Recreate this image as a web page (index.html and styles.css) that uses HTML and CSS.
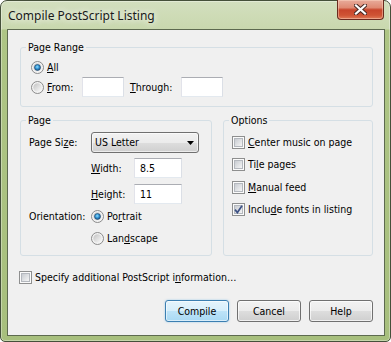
FILE: index.html
```html
<!DOCTYPE html>
<html>
<head>
<meta charset="utf-8">
<link rel="stylesheet" href="styles.css">
</head>
<body>
<svg class="defs" width="0" height="0" aria-hidden="true">
  <defs>
    <linearGradient id="rin" x1="0" y1="0" x2="1" y2="1">
      <stop offset="0" stop-color="#c2c2c2"/>
      <stop offset="1" stop-color="#fbfbfb"/>
    </linearGradient>
    <radialGradient id="rdot" cx="0.45" cy="0.4" r="0.6">
      <stop offset="0" stop-color="#8fe0ff"/>
      <stop offset="0.55" stop-color="#2f8fd0"/>
      <stop offset="1" stop-color="#1a4f80"/>
    </radialGradient>
    <linearGradient id="cin" x1="0" y1="0" x2="1" y2="1">
      <stop offset="0" stop-color="#c5c9cf"/>
      <stop offset="1" stop-color="#f8f8f8"/>
    </linearGradient>
  </defs>
</svg>
<div class="window">
  <div class="titlebar">
    <span class="title">Compile PostScript Listing</span>
    <div class="close">
      <svg width="13" height="11" viewBox="0 0 13 11">
        <path d="M2 1.5 L11 9.5 M11 1.5 L2 9.5" stroke="#4a2a24" stroke-width="4.2" stroke-linecap="square" fill="none"/>
        <path d="M2 1.5 L11 9.5 M11 1.5 L2 9.5" stroke="#ffffff" stroke-width="2.2" stroke-linecap="square" fill="none"/>
      </svg>
    </div>
  </div>
  <div class="client">
    <fieldset class="group range">
      <legend>Page Range</legend>
      <div class="range-body">
        <div class="row">
          <svg class="radio" viewBox="0 0 13 13"><circle cx="6.5" cy="6.5" r="6" fill="#f3f3f3" stroke="#8a8a8a"/><circle cx="6.5" cy="6.5" r="4.2" fill="url(#rin)"/><circle cx="6.5" cy="6.5" r="3" fill="url(#rdot)" stroke="#1d4a70" stroke-width="0.6"/></svg>
          <span class="lbl"><u>A</u>ll</span>
        </div>
        <div class="row">
          <svg class="radio" viewBox="0 0 13 13"><circle cx="6.5" cy="6.5" r="6" fill="#f3f3f3" stroke="#8a8a8a"/><circle cx="6.5" cy="6.5" r="4.2" fill="url(#rin)"/></svg>
          <span class="lbl from-lbl"><u>F</u>rom:</span>
          <div class="textbox short"></div>
          <span class="through-lbl"><u>T</u>hrough:</span>
          <div class="textbox short"></div>
        </div>
      </div>
    </fieldset>

    <div class="mid">
      <fieldset class="group page">
        <legend>Page</legend>
        <div class="page-body">
          <div class="row size-row">
            <span class="col-lbl">Page Si<u>z</u>e:</span>
            <div class="select">
              <span>US Letter</span>
              <svg width="7" height="4" viewBox="0 0 7 4"><path d="M0 0 H7 L3.5 4 Z" fill="#000"/></svg>
            </div>
          </div>
          <div class="row dim-row first">
            <span class="dim-lbl"><u>W</u>idth:</span>
            <div class="textbox dim">8.5</div>
          </div>
          <div class="row dim-row">
            <span class="dim-lbl"><u>H</u>eight:</span>
            <div class="textbox dim">11</div>
          </div>
          <div class="row orient-row">
            <span class="col-lbl">Orientation:</span>
            <svg class="radio" viewBox="0 0 13 13"><circle cx="6.5" cy="6.5" r="6" fill="#f3f3f3" stroke="#8a8a8a"/><circle cx="6.5" cy="6.5" r="4.2" fill="url(#rin)"/><circle cx="6.5" cy="6.5" r="3" fill="url(#rdot)" stroke="#1d4a70" stroke-width="0.6"/></svg>
            <span class="lbl">Po<u>r</u>trait</span>
          </div>
          <div class="row orient-row">
            <span class="col-lbl"></span>
            <svg class="radio" viewBox="0 0 13 13"><circle cx="6.5" cy="6.5" r="6" fill="#f3f3f3" stroke="#8a8a8a"/><circle cx="6.5" cy="6.5" r="4.2" fill="url(#rin)"/></svg>
            <span class="lbl">Lan<u>d</u>scape</span>
          </div>
        </div>
      </fieldset>

      <fieldset class="group options">
        <legend>Options</legend>
        <div class="options-body">
          <div class="row opt-row">
            <svg class="check" viewBox="0 0 13 13"><rect x="0.5" y="0.5" width="12" height="12" fill="#fbfbfb" stroke="#8e8f8f"/><rect x="2.5" y="2.5" width="8" height="8" fill="url(#cin)" stroke="#b4b8be"/></svg>
            <span class="lbl"><u>C</u>enter music on page</span>
          </div>
          <div class="row opt-row">
            <svg class="check" viewBox="0 0 13 13"><rect x="0.5" y="0.5" width="12" height="12" fill="#fbfbfb" stroke="#8e8f8f"/><rect x="2.5" y="2.5" width="8" height="8" fill="url(#cin)" stroke="#b4b8be"/></svg>
            <span class="lbl">Ti<u>l</u>e pages</span>
          </div>
          <div class="row opt-row">
            <svg class="check" viewBox="0 0 13 13"><rect x="0.5" y="0.5" width="12" height="12" fill="#fbfbfb" stroke="#8e8f8f"/><rect x="2.5" y="2.5" width="8" height="8" fill="url(#cin)" stroke="#b4b8be"/></svg>
            <span class="lbl"><u>M</u>anual feed</span>
          </div>
          <div class="row opt-row">
            <svg class="check" viewBox="0 0 13 13"><rect x="0.5" y="0.5" width="12" height="12" fill="#fbfbfb" stroke="#8e8f8f"/><rect x="2.5" y="2.5" width="8" height="8" fill="url(#cin)" stroke="#b4b8be"/><path d="M3 6.6 L5.4 9.6 L10 2.8" fill="none" stroke="#3d5285" stroke-width="1.7"/></svg>
            <span class="lbl">Inclu<u>d</u>e fonts in listing</span>
          </div>
        </div>
      </fieldset>
    </div>

    <div class="row specify">
      <svg class="check" viewBox="0 0 13 13"><rect x="0.5" y="0.5" width="12" height="12" fill="#fbfbfb" stroke="#8e8f8f"/><rect x="2.5" y="2.5" width="8" height="8" fill="url(#cin)" stroke="#b4b8be"/></svg>
      <span class="lbl">Specify additional PostScript i<u>n</u>formation…</span>
    </div>

    <div class="buttons">
      <div class="btn default">Compile</div>
      <div class="btn">Cancel</div>
      <div class="btn">Help</div>
    </div>
  </div>
</div>
</body>
</html>
```
FILE: styles.css
```css
html, body {
  margin: 0;
  padding: 0;
  background: #ffffff;
}

.defs {
  display: block;
  width: 0;
  height: 0;
  overflow: hidden;
}

.window {
  width: 391px;
  height: 342px;
  box-sizing: border-box;
  border: 1px solid #45503a;
  border-radius: 7px 7px 5px 5px;
  background: linear-gradient(to bottom, #d3dfbf 0px, #c9d8ae 28px, #aec585 29px, #a7bf7d 100%);
  box-shadow: inset 0 0 0 1px rgba(255, 255, 255, 0.35);
  padding: 0 5px 5px 6px;
  display: flex;
  flex-direction: column;
  font-family: "DejaVu Sans Condensed", "Liberation Sans", sans-serif;
  font-size: 10.5px;
  line-height: 13px;
  color: #000;
}

.titlebar {
  height: 28px;
  display: flex;
  align-items: flex-start;
  flex-shrink: 0;
}

.title {
  margin: 7px 0 0 1px;
  font-family: "Noto Sans", "Open Sans", sans-serif;
  font-size: 12px;
  line-height: 16px;
  color: #1a1a1a;
  text-shadow: 0 0 6px rgba(255, 255, 255, 0.9), 0 0 10px rgba(255, 255, 255, 0.7);
}

.close {
  margin-left: auto;
  margin-right: 1px;
  margin-top: -1px;
  width: 47px;
  height: 20px;
  box-sizing: border-box;
  border: 1px solid #6a2a1f;
  border-top: none;
  border-radius: 0 0 4px 4px;
  background: linear-gradient(to bottom, #e8ab9b 0%, #df8a73 40%, #c8452b 52%, #cf5334 80%, #e07a57 100%);
  box-shadow: inset 0 0 0 1px rgba(255, 220, 200, 0.45);
  display: flex;
  align-items: center;
  justify-content: center;
}

.client {
  flex: 1;
  border: 1px solid #5d6a4f;
  background: #f0f0f0;
  padding: 11px 11px 0 12px;
  display: flex;
  flex-direction: column;
}

.group {
  margin: 0;
  padding: 0;
  border: 1px solid #d5dfe5;
  border-radius: 3px;
  min-width: 0;
}

.group legend {
  margin-left: 5px;
  padding: 0 2px;
  line-height: 13px;
}

.row {
  display: flex;
  align-items: center;
}

.radio,
.check {
  width: 13px;
  height: 13px;
  flex-shrink: 0;
}

.lbl {
  margin-left: 3px;
  white-space: nowrap;
}

u {
  text-decoration: underline;
  text-underline-offset: 1px;
}

/* Page Range */
.range-body {
  padding: 3px 0 9px 10px;
}

.range-body .row {
  height: 20px;
}

.from-lbl {
  width: 35px;
}

.through-lbl {
  width: 51px;
  margin-left: 6px;
}

.textbox {
  box-sizing: border-box;
  height: 20px;
  background: #ffffff;
  border: 1px solid;
  border-color: #abadb3 #dbdfe6 #e3e9ef #e2e3ea;
  padding-left: 5px;
  display: flex;
  align-items: center;
}

.textbox.short {
  width: 42px;
}

/* Middle groups */
.mid {
  display: flex;
  gap: 11px;
  margin-top: 7px;
}

.page {
  width: 190px;
  flex-shrink: 0;
}

.options {
  flex: 1;
}

.page-body {
  padding: 5px 0 7px 8px;
}

.col-lbl {
  width: 62px;
  flex-shrink: 0;
  white-space: nowrap;
}

.size-row {
  height: 21px;
}

.select {
  box-sizing: border-box;
  width: 108px;
  height: 21px;
  border: 1px solid #707070;
  border-radius: 3px;
  background: linear-gradient(to bottom, #f2f2f2 0%, #ebebeb 50%, #dddddd 51%, #cfcfcf 100%);
  box-shadow: inset 0 0 0 1px rgba(255, 255, 255, 0.6);
  padding: 0 4px 0 3px;
  display: flex;
  align-items: center;
  justify-content: space-between;
}

.dim-row {
  height: 20px;
  margin-top: 6px;
  padding-left: 62px;
}

.dim-row.first {
  margin-top: 5px;
}

.dim-lbl {
  width: 43px;
  flex-shrink: 0;
}

.textbox.dim {
  width: 48px;
}

.orient-row {
  height: 20px;
  margin-top: 2px;
}

.orient-row .radio {
  margin-left: 0;
}

.options-body {
  padding: 4px 0 0 8px;
  display: flex;
  flex-direction: column;
  gap: 0.67px;
}

.opt-row {
  height: 22px;
}

/* Bottom */
.specify {
  height: 21px;
  margin-top: 11px;
  margin-left: -1px;
}

.buttons {
  display: flex;
  justify-content: flex-end;
  gap: 8px;
  margin-top: 12px;
}

.btn {
  box-sizing: border-box;
  width: 64px;
  height: 22px;
  border: 1px solid #707070;
  border-radius: 3px;
  background: linear-gradient(to bottom, #f2f2f2 0%, #ebebeb 50%, #dddddd 51%, #cfcfcf 100%);
  box-shadow: inset 0 0 0 1px rgba(255, 255, 255, 0.7);
  display: flex;
  align-items: center;
  justify-content: center;
}

.btn.default {
  border-color: #3c7fb1;
  background: linear-gradient(to bottom, #e5f4fc 0%, #d6eefb 50%, #bde3f8 51%, #a9d9f3 100%);
  box-shadow: inset 0 0 0 1px rgba(255, 255, 255, 0.55), 0 0 2px rgba(60, 160, 230, 0.5);
}
```
